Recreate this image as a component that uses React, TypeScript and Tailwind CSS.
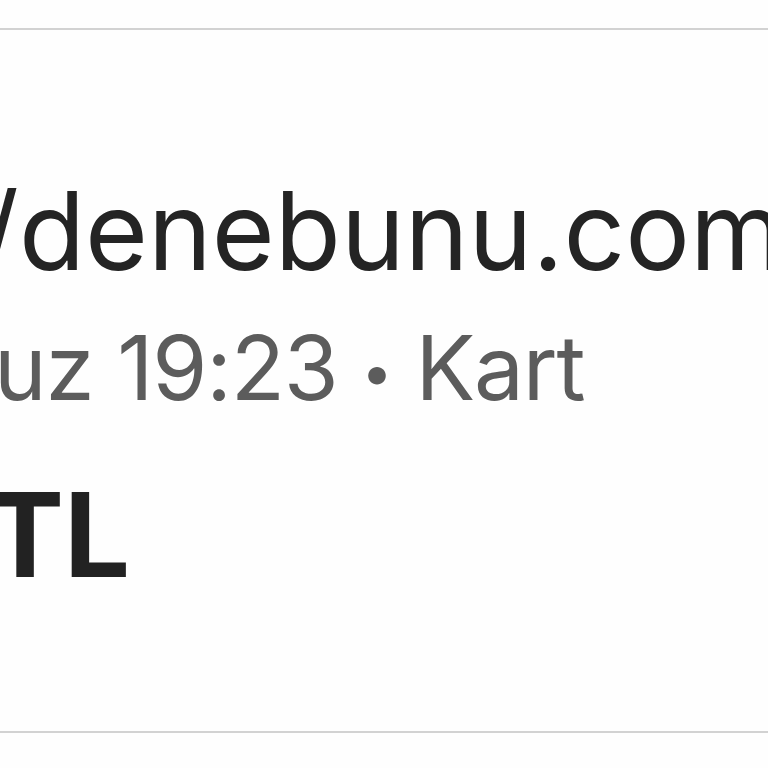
export default function App() {
  return (
    <div className="h-[768px] w-full overflow-hidden bg-[#fefefe] pt-[28px]" style={{ fontFamily: 'Inter, "Noto Sans", sans-serif' }}>
      <div className="flex h-[705px] flex-col border-y-2 border-[#d2d2d2] pt-[147px]">
        <div className="ml-[-20px] whitespace-nowrap text-[108px] leading-[108px] font-normal text-[#242424]">
          /denebunu.com
        </div>
        <div className="ml-[-6px] mt-[38px] whitespace-nowrap text-[89px] leading-[89px] tracking-[-1.2px] text-[#5c5c5c]">
          uz 19:23 <span className="inline-block align-[8px] text-[56px]">•</span> Kart
        </div>
        <div className="ml-[-14px] mt-[59px] whitespace-nowrap text-[117px] leading-[117px] font-bold text-[#222]">
          TL
        </div>
      </div>
    </div>
  );
}
